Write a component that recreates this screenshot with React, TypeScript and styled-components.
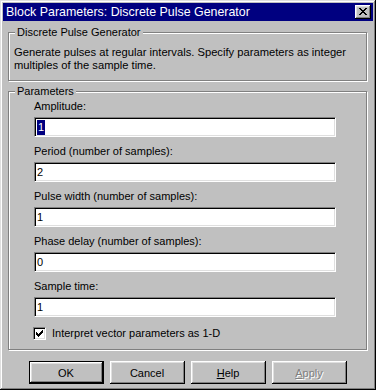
import React from 'react'
import styled, { createGlobalStyle } from 'styled-components'

const GlobalStyle = createGlobalStyle`
  html, body {
    margin: 0;
    padding: 0;
    background: #c0c0c0;
  }
  body {
    font-family: "Liberation Sans", Arial, sans-serif;
    font-size: 11px;
    color: #000;
  }
`

const Window = styled.div`
  width: 376px;
  height: 390px;
  box-sizing: border-box;
  padding: 3px;
  background: #c0c0c0;
  box-shadow: inset -1px -1px 0 #000, inset 1px 1px 0 #dfdfdf,
    inset -2px -2px 0 #808080, inset 2px 2px 0 #fff;
  display: flex;
  flex-direction: column;
`

const TitleBar = styled.div`
  height: 18px;
  background: #000080;
  color: #fff;
  display: flex;
  align-items: center;
  justify-content: space-between;
  padding: 0 2px 0 3px;
`

const TitleText = styled.span`
  font-size: 12.4px;
  white-space: nowrap;
`

const CloseButton = styled.div`
  width: 16px;
  height: 14px;
  box-sizing: border-box;
  background: #c0c0c0;
  box-shadow: inset -1px -1px 0 #000, inset 1px 1px 0 #fff,
    inset -2px -2px 0 #808080, inset 2px 2px 0 #dfdfdf;
  display: flex;
  align-items: center;
  justify-content: center;
  padding: 0 1px 1px 0;
`

const Body = styled.div`
  padding: 5px 6px 0 5px;
  display: flex;
  flex-direction: column;
`

const Group = styled.fieldset<{ $gap?: number }>`
  margin: ${p => p.$gap ?? 0}px 0 0 0;
  padding: 0;
  min-width: 0;
  border: 1px solid #808080;
  box-shadow: 1px 1px 0 #fff, inset 1px 1px 0 #fff;
`

const Legend = styled.legend`
  margin-left: 6px;
  padding: 0 2px;
  line-height: 13px;
  background: #c0c0c0;
`

const Description = styled.div`
  padding: 7px 5px 8px 5px;
  line-height: 13px;
  white-space: nowrap;
  font-size: 11.2px;
`

const ParamList = styled.div`
  padding: 2px 30px 9px 25px;
  display: flex;
  flex-direction: column;
  gap: 8px;
`

const Field = styled.div`
  display: flex;
  flex-direction: column;
`

const FieldLabel = styled.div`
  line-height: 13px;
  margin-bottom: 4px;
`

const TextBox = styled.div`
  height: 20px;
  box-sizing: border-box;
  background: #fff;
  border-style: solid;
  border-width: 1px;
  border-color: #808080 #fff #fff #808080;
  box-shadow: inset 1px 1px 0 #000, inset -1px -1px 0 #dfdfdf;
  padding: 0 0 0 2px;
  display: flex;
  align-items: center;
  line-height: 15px;
`

const Selection = styled.span`
  background: #000080;
  color: #fff;
  padding: 0 1px;
`

const CheckRow = styled.div`
  display: flex;
  align-items: center;
  gap: 6px;
  margin-top: 2px;
  margin-left: -1px;
  line-height: 13px;
`

const CheckBox = styled.div`
  width: 13px;
  height: 13px;
  box-sizing: border-box;
  background: #fff;
  border-style: solid;
  border-width: 1px;
  border-color: #808080 #fff #fff #808080;
  box-shadow: inset 1px 1px 0 #000, inset -1px -1px 0 #dfdfdf;
  display: flex;
  align-items: center;
  justify-content: center;
`

const ButtonRow = styled.div`
  display: flex;
  justify-content: center;
  gap: 6px;
  margin-top: 11px;
`

const Button = styled.div<{ $default?: boolean; $disabled?: boolean }>`
  width: 75px;
  height: 23px;
  box-sizing: border-box;
  display: flex;
  align-items: center;
  justify-content: center;
  background: #c0c0c0;
  border: ${p => (p.$default ? '1px solid #000' : 'none')};
  box-shadow: inset -1px -1px 0 #000, inset 1px 1px 0 #fff,
    inset -2px -2px 0 #808080, inset 2px 2px 0 #dfdfdf;
  color: ${p => (p.$disabled ? '#808080' : '#000')};
  text-shadow: ${p => (p.$disabled ? '1px 1px 0 #fff' : 'none')};
`

const Mnemonic = styled.span`
  text-decoration: underline;
`

function CloseGlyph() {
  return (
    <svg width="8" height="7" viewBox="0 0 8 7" shapeRendering="crispEdges">
      <path
        fill="#000"
        d="M0 0h2v1H0zM6 0h2v1H6zM1 1h2v1H1zM5 1h2v1H5zM2 2h4v1H2zM3 3h2v1H3zM2 4h4v1H2zM1 5h2v1H1zM5 5h2v1H5zM0 6h2v1H0zM6 6h2v1H6z"
      />
    </svg>
  )
}

function CheckGlyph() {
  return (
    <svg width="7" height="7" viewBox="0 0 7 7" shapeRendering="crispEdges">
      <path
        fill="#000"
        d="M6 0h1v1H6zM5 1h2v1H5zM0 2h1v1H0zM4 2h3v1H4zM0 3h2v1H0zM3 3h3v1H3zM0 4h5v1H0zM1 5h3v1H1zM2 6h1v1H2z"
      />
    </svg>
  )
}

type Param = { label: string; value: string; selected?: boolean }

const PARAMS: Array<Param> = [
  { label: 'Amplitude:', value: '1', selected: true },
  { label: 'Period (number of samples):', value: '2' },
  { label: 'Pulse width (number of samples):', value: '1' },
  { label: 'Phase delay (number of samples):', value: '0' },
  { label: 'Sample time:', value: '1' },
]

export default function App() {
  return (
    <>
      <GlobalStyle />
      <Window>
        <TitleBar>
          <TitleText>Block Parameters: Discrete Pulse Generator</TitleText>
          <CloseButton>
            <CloseGlyph />
          </CloseButton>
        </TitleBar>
        <Body>
          <Group>
            <Legend>Discrete Pulse Generator</Legend>
            <Description>
              Generate pulses at regular intervals. Specify parameters as integer
              <br />
              multiples of the sample time.
            </Description>
          </Group>
          <Group $gap={4}>
            <Legend>Parameters</Legend>
            <ParamList>
              {PARAMS.map(param => (
                <Field key={param.label}>
                  <FieldLabel>{param.label}</FieldLabel>
                  <TextBox>
                    {param.selected ? <Selection>{param.value}</Selection> : param.value}
                  </TextBox>
                </Field>
              ))}
              <CheckRow>
                <CheckBox>
                  <CheckGlyph />
                </CheckBox>
                <span>Interpret vector parameters as 1-D</span>
              </CheckRow>
            </ParamList>
          </Group>
          <ButtonRow>
            <Button $default>OK</Button>
            <Button>Cancel</Button>
            <Button>
              <span><Mnemonic>H</Mnemonic>elp</span>
            </Button>
            <Button $disabled>
              <span><Mnemonic>A</Mnemonic>pply</span>
            </Button>
          </ButtonRow>
        </Body>
      </Window>
    </>
  )
}
